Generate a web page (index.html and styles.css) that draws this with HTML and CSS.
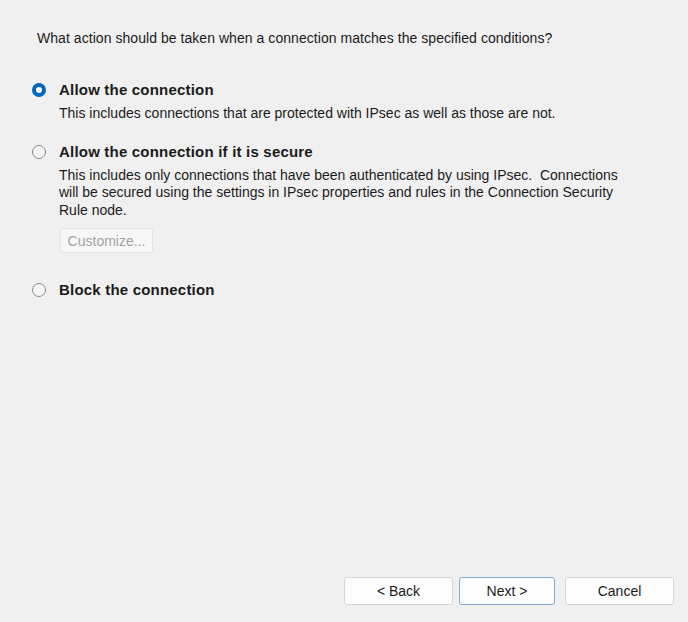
FILE: index.html
```html
<!DOCTYPE html>
<html>
<head>
<meta charset="utf-8">
<link rel="stylesheet" href="styles.css">
</head>
<body>
<div class="page">
  <p class="question">What action should be taken when a connection matches the specified conditions?</p>
  <div class="options">
    <div class="option opt1">
      <div class="row"><span class="radio checked"></span><span class="label">Allow the connection</span></div>
      <p class="desc">This includes connections that are protected with IPsec as well as those are not.</p>
    </div>
    <div class="option opt2">
      <div class="row"><span class="radio"></span><span class="label">Allow the connection if it is secure</span></div>
      <p class="desc">This includes only connections that have been authenticated by using IPsec.&nbsp; Connections<br>will be secured using the settings in IPsec properties and rules in the Connection Security<br>Rule node.</p>
      <button class="customize" disabled>Customize...</button>
    </div>
    <div class="option opt3">
      <div class="row"><span class="radio"></span><span class="label">Block the connection</span></div>
    </div>
  </div>
  <div class="spacer"></div>
  <div class="buttons">
    <button class="btn back">&lt; Back</button>
    <button class="btn next">Next &gt;</button>
    <button class="btn cancel">Cancel</button>
  </div>
</div>
</body>
</html>
```
FILE: styles.css
```css
html, body {
  margin: 0;
  padding: 0;
  background: #f0f0f0;
}
body {
  font-family: "Liberation Sans", Arial, sans-serif;
  font-size: 14px;
  color: #1b1b1b;
}
.page {
  height: 622px;
  display: flex;
  flex-direction: column;
  box-sizing: border-box;
  padding: 30px 14px 17px 0;
}
.question {
  margin: 0 0 0 37px;
  line-height: 17px;
  letter-spacing: 0.05px;
}
.options {
  padding-left: 32px;
  margin-top: 33px;
  display: flex;
  flex-direction: column;
}
.row {
  display: flex;
  align-items: center;
  gap: 13px;
  height: 20px;
}
.label {
  font-weight: bold;
  font-size: 15px;
  line-height: 20px;
  letter-spacing: 0.2px;
}
.radio {
  width: 14px;
  height: 14px;
  box-sizing: border-box;
  border-radius: 50%;
  border: 1px solid #8a8a8a;
  background: #f6f6f6;
  flex: none;
}
.radio.checked {
  border: 4.5px solid #0067c0;
  background: #ffffff;
}
.desc {
  margin: 5px 0 0 27px;
  line-height: 17.5px;
}
.opt2 {
  margin-top: 19px;
}
.opt3 {
  margin-top: 27px;
}
.customize {
  margin: 9px 0 0 28px;
  width: 93px;
  height: 25px;
  font-family: inherit;
  font-size: 14px;
  color: #a3a3a3;
  background: #f7f7f7;
  border: 1px solid #e3e3e3;
  border-radius: 3px;
  padding: 0;
  display: block;
}
.spacer {
  flex: 1;
}
.buttons {
  display: flex;
  justify-content: flex-end;
}
.btn {
  height: 28px;
  font-family: inherit;
  font-size: 14px;
  color: #1b1b1b;
  background: #fdfdfd;
  border: 1px solid #d6d6d6;
  border-radius: 3px;
  padding: 0;
}
.back {
  width: 109px;
}
.next {
  width: 96px;
  margin-left: 6px;
  border-color: #7fa9d6;
}
.cancel {
  width: 109px;
  margin-left: 10px;
}
```
